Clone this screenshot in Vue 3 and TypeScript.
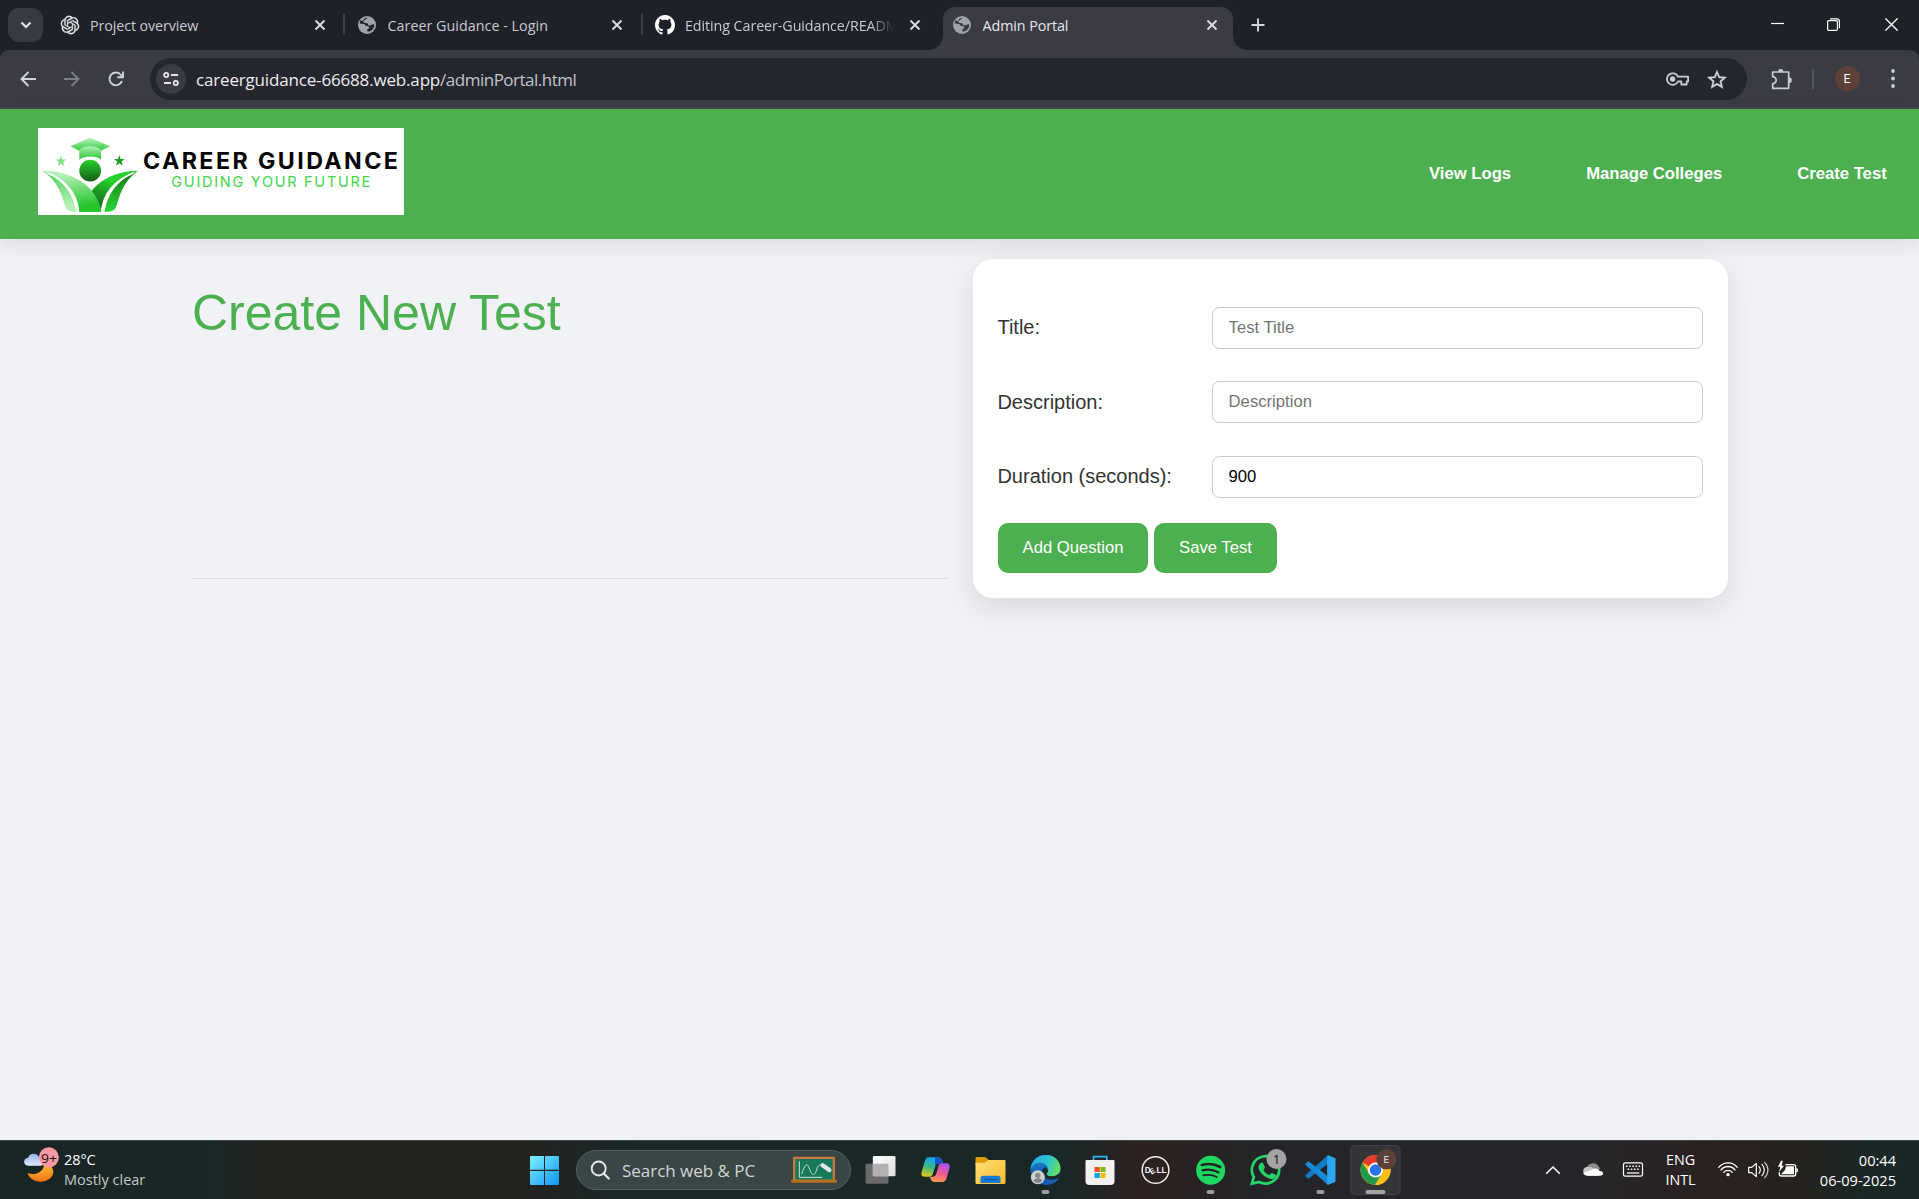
<script setup lang="ts">
import { ref } from 'vue'

interface Tab {
  title: string
  icon: 'openai' | 'globe' | 'github'
  active?: boolean
  separator?: boolean
  cls: string
}

const tabs: Tab[] = [
  { title: 'Project overview', icon: 'openai', separator: true, cls: 't1' },
  { title: 'Career Guidance - Login', icon: 'globe', separator: true, cls: 't2' },
  { title: 'Editing Career-Guidance/README', icon: 'github', cls: 't3' },
  { title: 'Admin Portal', icon: 'globe', active: true, cls: 't4' },
]

const links = ['View Logs', 'Manage Colleges', 'Create Test']
const title = ref('')
const description = ref('')
const duration = ref('900')
</script>

<template>
  <div class="screen">
    <div class="tabstrip">
      <div class="tab-search">
        <svg width="12" height="8" viewBox="0 0 12 8"><path d="M1.5 1.5 6 6l4.500-4.500" fill="none" stroke="#e3e4e8" stroke-width="2.200" /></svg>
      </div>
      <div v-for="t in tabs" :key="t.title" class="tab" :class="{ active: t.active, separated: t.separator }">
        <svg v-if="t.icon === 'openai'" class="fav" viewBox="-1 -1 26 26"><path fill="#e6e7ea" stroke="#e6e7ea" stroke-width=".4" d="M22.2819 9.8211a5.9847 5.9847 0 0 0-.5157-4.9108 6.0462 6.0462 0 0 0-6.5098-2.9A6.0651 6.0651 0 0 0 4.9807 4.1818a5.9847 5.9847 0 0 0-3.9977 2.9 6.0462 6.0462 0 0 0 .7427 7.0966 5.98 5.98 0 0 0 .511 4.9107 6.051 6.051 0 0 0 6.5146 2.9001A5.9847 5.9847 0 0 0 13.2599 24a6.0557 6.0557 0 0 0 5.7718-4.2058 5.9894 5.9894 0 0 0 3.9977-2.9001 6.0557 6.0557 0 0 0-.7475-7.0729zm-9.022 12.6081a4.4755 4.4755 0 0 1-2.8764-1.0408l.1419-.0804 4.7783-2.7582a.7948.7948 0 0 0 .3927-.6813v-6.7369l2.02 1.1686a.071.071 0 0 1 .038.052v5.5826a4.504 4.504 0 0 1-4.4945 4.4944zm-9.6607-4.1254a4.4708 4.4708 0 0 1-.5346-3.0137l.142.0852 4.783 2.7582a.7712.7712 0 0 0 .7806 0l5.8428-3.3685v2.3324a.0804.0804 0 0 1-.0332.0615L9.74 19.9502a4.4992 4.4992 0 0 1-6.1408-1.6464zM2.3408 7.8956a4.485 4.485 0 0 1 2.3655-1.9728V11.6a.7664.7664 0 0 0 .3879.6765l5.8144 3.3543-2.0201 1.1685a.0757.0757 0 0 1-.071 0l-4.8303-2.7865A4.504 4.504 0 0 1 2.3408 7.872zm16.5963 3.8558L13.1038 8.364 15.1192 7.2a.0757.0757 0 0 1 .071 0l4.8303 2.7913a4.4944 4.4944 0 0 1-.6765 8.1042v-5.6772a.79.79 0 0 0-.407-.667zm2.0107-3.0231l-.142-.0852-4.7735-2.7818a.7759.7759 0 0 0-.7854 0L9.409 9.2297V6.8974a.0662.0662 0 0 1 .0284-.0615l4.8303-2.7866a4.4992 4.4992 0 0 1 6.6802 4.66zM8.3065 12.863l-2.02-1.1638a.0804.0804 0 0 1-.038-.0567V6.0742a4.4992 4.4992 0 0 1 7.3757-3.4537l-.142.0805L8.704 5.459a.7948.7948 0 0 0-.3927.6813zm1.0976-2.3654l2.602-1.4998 2.6069 1.4998v2.9994l-2.5974 1.4997-2.6067-1.4997Z" /></svg>
        <svg v-else-if="t.icon === 'globe'" class="fav" viewBox="0 0 20 20">
          <circle cx="10" cy="10" r="9" fill="#a0a3ab" />
          <path :fill="t.active ? '#3a3b43' : '#1e2128'" d="M11.500 2.600C9 3.200 9.500 4.800 7.600 5.200 5.800 5.500 6.200 7.500 7.800 7.900c1.400.2 3-.1 3.200 1.300.1 1.300 1.500 1.600 2.300 1.200 1-.5 1.700-1.400 3.900-1.200.3 2.200-.6 4.300-2.200 5.700-1.500 1.300-3.200 1.700-4.700 1.700v-2.500c1.200-.1 1.900-.7 1.800-1.700-.1-1.100-1.200-1.300-2.400-1.400-1.700-.2-1.500-2-3-2.100-1.500 0-2.500-.3-3.900-.5.300 1.500-.6-.6.700-3 .4-.8 1.100-1 .9-.3-.3 1.400 1 1.100 1.800.3 1-1 .6-1.500 2.200-2.100 1.100-.4 2-.9 3.100-.7z" />
        </svg>
        <svg v-else class="fav gh" viewBox="0 0 16 16"><path fill="#fff" d="M8 0C3.580 0 0 3.580 0 8c0 3.540 2.290 6.530 5.470 7.590.4.070.550-.170.550-.380 0-.190-.010-.820-.010-1.490-2.010.370-2.530-.490-2.690-.940-.090-.230-.480-.940-.820-1.130-.280-.150-.680-.520-.010-.530.630-.010 1.080.580 1.230.820.720 1.210 1.870.870 2.330.660.070-.520.280-.870.510-1.070-1.780-.2-3.640-.890-3.640-3.950 0-.870.310-1.590.820-2.150-.080-.2-.360-1.020.080-2.120 0 0 .670-.210 2.200.820.640-.180 1.320-.270 2-.270s1.360.090 2 .270c1.530-1.040 2.200-.820 2.200-.820.440 1.100.160 1.920.080 2.120.510.560.820 1.270.820 2.150 0 3.070-1.870 3.750-3.650 3.950.290.250.540.730.540 1.480 0 1.070-.010 1.930-.010 2.200 0 .210.150.460.550.380A8.013 8.013 0 0 0 16 8c0-4.420-3.580-8-8-8z" /></svg>
        <span class="tab-title" :class="t.cls">{{ t.title }}</span>
        <svg class="tab-close" viewBox="0 0 12 12"><path d="M1.500 1.500l9 9M10.500 1.500l-9 9" fill="none" stroke="#dcdde2" stroke-width="1.900" /></svg>
      </div>
      <svg class="new-tab" viewBox="0 0 14 14"><path d="M7 .5v13M.5 7h13" stroke="#d3d5db" stroke-width="1.900" /></svg>
      <div class="win-controls">
        <svg viewBox="0 0 13 13"><path d="M0 5.500h13" stroke="#fff" stroke-width="1.200" /></svg>
        <svg viewBox="0 0 13 13"><g fill="none" stroke="#fff" stroke-width="1.200"><rect x=".6" y="2.600" width="9.800" height="9.800" rx="1.200" /><path d="M3 .8h7a2.400 2.400 0 0 1 2.400 2.400v7" /></g></svg>
        <svg viewBox="0 0 13 13"><path d="M.4.4l12.200 12.200M12.600.4.4 12.600" stroke="#fff" stroke-width="1.300" /></svg>
      </div>
    </div>

    <div class="toolbar-wrap">
      <div class="toolbar">
        <svg class="nav-ico" viewBox="0 0 16 16"><path d="M8.500 1 1.500 8l7 7M1.500 8H16" fill="none" stroke="#cfd1d7" stroke-width="1.900" /></svg>
        <svg class="nav-ico" viewBox="0 0 16 16"><path d="M7.500 1l7 7-7 7M14.500 8H0" fill="none" stroke="#7d7e85" stroke-width="1.900" /></svg>
        <svg class="nav-ico reload" viewBox="0 0 16 16"><path d="M13.900 10.200A6.400 6.400 0 1 1 13 4l1.500 1.800M15 .5v5.700H9.300" fill="none" stroke="#cfd1d7" stroke-width="1.900" /></svg>
        <div class="omnibox">
          <span class="site-info">
            <svg width="16" height="14" viewBox="0 0 16 14" fill="none" stroke="#e3e4e8" stroke-width="1.800"><circle cx="3.200" cy="3" r="2.100" /><path d="M8 3h7M1 11h7" /><circle cx="12.800" cy="11" r="2.100" /></svg>
          </span>
          <span class="url">careerguidance-66688.web.app<span class="path">/adminPortal.html</span></span>
          <svg class="key" viewBox="0 0 23 14"><g fill="none" stroke="#cbccd1" stroke-width="1.800"><path d="M12 4.700A5.800 5.800 0 1 0 12 9.500h3.300v3h5.400V9.500h1.400V4.700z" stroke-linejoin="round" /></g><circle cx="6.600" cy="7" r="2.700" fill="#cbccd1" /></svg>
          <svg class="star" viewBox="2 2 20 19.500"><path fill="#d3d4d9" stroke="#d3d4d9" stroke-width=".3" d="M22 9.240l-7.190-.620L12 2 9.190 8.630 2 9.240l5.460 4.730L5.820 21 12 17.270 18.180 21l-1.630-7.030L22 9.240zM12 15.400l-3.760 2.270 1-4.280-3.320-2.880 4.380-.380L12 6.100l1.710 4.040 4.380.380-3.320 2.880 1 4.280L12 15.400z" /></svg>
        </div>
        <svg class="ext" viewBox="512 202 66 66"><path d="M517 214h48v49H517V249a10.500 10.500 0 0 0 0-21z" fill="none" stroke="#c9ccd6" stroke-width="5.200" stroke-linejoin="round" /><path d="M533 213a8 8 0 0 1 16 0zM566 230a8 8 0 0 1 0 17z" fill="#c9ccd6" /></svg>
        <i class="bar-sep"></i>
        <span class="avatar">E</span>
        <svg class="dots" viewBox="0 0 4 19" fill="#c9ccd6"><circle cx="2" cy="2" r="1.900" /><circle cx="2" cy="9.500" r="1.900" /><circle cx="2" cy="17" r="1.900" /></svg>
      </div>
    </div>

    <header class="site-header">
      <svg class="logo" viewBox="114 69 1098 261">
        <defs>
          <linearGradient id="capG" x1="0" y1="0" x2="0" y2="1"><stop offset="0" stop-color="#b9f3bd" /><stop offset=".75" stop-color="#2ec936" /></linearGradient>
          <linearGradient id="capB" x1="0" y1="0" x2="0" y2="1"><stop offset="0" stop-color="#aef0b2" /><stop offset="1" stop-color="#26c52e" /></linearGradient>
          <linearGradient id="headG" x1="0" y1="0" x2="0" y2="1"><stop offset="0" stop-color="#27d12c" /><stop offset="1" stop-color="#155a18" /></linearGradient>
          <linearGradient id="leafL" x1="0" y1="0" x2="0.300" y2="1"><stop offset=".2" stop-color="#b4f0b7" /><stop offset="1" stop-color="#25c52c" /></linearGradient>
          <linearGradient id="leafR" x1="0.700" y1="0" x2="0.200" y2="1"><stop offset=".3" stop-color="#27d22c" /><stop offset="1" stop-color="#0f5a14" /></linearGradient>
          <linearGradient id="sideL" x1="0" y1="0" x2="0.300" y2="1"><stop offset="0" stop-color="#42cf49" /><stop offset="1" stop-color="#b4f2b8" /></linearGradient>
          <linearGradient id="sideR" x1="0" y1="0" x2="0" y2="1"><stop offset="0" stop-color="#157519" /><stop offset="1" stop-color="#2ad832" /></linearGradient>
        </defs>
        <rect x="114" y="69" width="1098" height="261" fill="#fff" />
        <path d="M270 98l60 26-60 30-59-30z" fill="url(#capG)" />
        <path d="M238 136c8-16 56-16 65 0v28c-14-13-50-13-65 0z" fill="url(#capB)" />
        <circle cx="270.500" cy="197" r="32.500" fill="url(#headG)" />
        <path d="M183 152l4 11.500h12l-9.500 7.500 3.500 12-10-7-10 7 3.500-12-9.500-7.500h12z" fill="#7fe085" />
        <path d="M358 150l4 12h12l-9.500 7.500 3.500 12.500-10-7-10 7 3.500-12.500-9.500-7.500h12z" fill="#1c9f24" />
        <path d="M126 197c36 20 54 56 65 92 6 22 10 32 38 32-9-57-42-100-103-124z" fill="url(#sideL)" />
        <path d="M414 198c-35 24-50 56-61 93-6 22-10 30-39 30 8-59 44-99 100-123z" fill="url(#sideR)" />
        <path d="M414 197c-65 0-120 30-142 66 16 18 27 34 31 58 7-59 47-102 111-124z" fill="url(#leafR)" />
        <path d="M126 197c78-2 159 36 178 118v6h-66c-3-59-45-104-112-124z" fill="url(#leafL)" />
        <path d="M142 204c55 22 87 62 92 117M400 204c-55 22-90 62-95 117" fill="none" stroke="#fff" stroke-width="5" />
        <text x="429" y="192" textLength="772" lengthAdjust="spacingAndGlyphs" class="logo-main">CAREER GUIDANCE</text>
        <text x="514" y="246" textLength="602" lengthAdjust="spacingAndGlyphs" class="logo-sub">GUIDING YOUR FUTURE</text>
      </svg>
      <nav class="links">
        <a v-for="l in links" :key="l">{{ l }}</a>
      </nav>
    </header>

    <main class="content">
      <section class="intro"><h1>Create New Test</h1></section>
      <section class="card">
        <div class="row"><label>Title:</label><input v-model="title" placeholder="Test Title" /></div>
        <div class="row"><label>Description:</label><input v-model="description" placeholder="Description" /></div>
        <div class="row"><label>Duration (seconds):</label><input v-model="duration" /></div>
        <div class="actions"><button>Add Question</button><button>Save Test</button></div>
      </section>
    </main>

    <footer class="taskbar">
      <div class="weather">
        <svg width="64" height="58" viewBox="0 33 192 174">
          <defs>
            <linearGradient id="moon" x1="0" y1="0" x2="0" y2="1"><stop offset="0" stop-color="#fbc02c" /><stop offset="1" stop-color="#f0731e" /></linearGradient>
            <linearGradient id="cloud" x1="0" y1="0" x2="0" y2="1"><stop offset="0" stop-color="#8fb4f0" /><stop offset="1" stop-color="#dfe9fb" /></linearGradient>
          </defs>
          <path d="M83 129c22 10 52-4 49-30 15 2 28 12 28 26a38 30 0 0 1-38 30c-20 0-35-10-39-26z" fill="url(#moon)" />
          <path d="M84 107a11 11 0 0 1 0-23c3-16 28-17 33-2 14-2 20 24 5 25z" fill="url(#cloud)" />
          <circle cx="146.500" cy="82" r="30" fill="#ff99a4" />
          <text x="147" y="98" text-anchor="middle" class="badge9" textLength="48" lengthAdjust="spacingAndGlyphs">9+</text>
        </svg>
        <div class="weather-text"><span class="temp">28°C</span><span class="cond">Mostly clear</span></div>
      </div>

      <div class="apps">
        <svg class="slot" viewBox="21 33 165 174">
          <defs><linearGradient id="win" gradientUnits="userSpaceOnUse" x1="60" y1="78" x2="147" y2="165"><stop offset="0" stop-color="#7ff0ff" /><stop offset="1" stop-color="#1095fb" /></linearGradient></defs>
          <path fill="url(#win)" d="M63 78h39v41H60V81q0-3 3-3zM105 78h39q3 0 3 3v38h-42zM60 123h42v42H63q-3 0-3-3zM105 123h42v39q0 3-3 3h-39z" />
        </svg>
        <div class="search">
          <svg width="20" height="20" viewBox="0 0 20 20"><circle cx="8.700" cy="8.500" r="7" fill="none" stroke="#e9ebeb" stroke-width="1.900" /><path d="M13.700 13.500l5 5" stroke="#e9ebeb" stroke-width="2.200" stroke-linecap="round" /></svg>
          <span>Search web &amp; PC</span>
          <svg class="board" width="46" height="28" viewBox="843 82 138 84">
            <rect x="849" y="84" width="126" height="74" rx="3" fill="#c9783b" /><rect x="856" y="91" width="112" height="62" fill="#18795a" />
            <rect x="843" y="153" width="138" height="9" rx="3" fill="#b8721b" />
            <path d="M868 98v48h68M875 136c12-36 18-32 24-14s14 24 22-2c4-12 10-12 18-12" fill="none" stroke="#cde8dd" stroke-width="3" />
            <path d="M938 110l20 14" stroke="#e5e3ee" stroke-width="13" stroke-linecap="round" />
          </svg>
        </div>
        <svg class="slot first" viewBox="1030.5 33 165 174">
          <defs><linearGradient id="tv" x1="0" y1="0" x2="1" y2="1"><stop offset="0" stop-color="#fff" /><stop offset="1" stop-color="#dedede" /></linearGradient></defs>
          <rect x="1068" y="101" width="69" height="60" rx="4" fill="#6b6a6a" /><rect x="1090" y="78" width="68" height="61" rx="4" fill="url(#tv)" /><path d="M1090 101h47v38h-43q-4 0-4-4z" fill="#b1b1b1" />
        </svg>
        <svg class="slot" viewBox="1195.5 33 165 174">
          <defs>
            <linearGradient id="cpA" x1="0.300" y1="0" x2="0" y2="1"><stop offset="0" stop-color="#19a5ee" /><stop offset=".45" stop-color="#37b982" /><stop offset="1" stop-color="#ffca0b" /></linearGradient>
            <linearGradient id="cpB" x1="0.600" y1="0" x2="0.300" y2="1"><stop offset="0" stop-color="#a952ee" /><stop offset=".5" stop-color="#ee5b91" /><stop offset="1" stop-color="#fd9a4f" /></linearGradient>
          </defs>
          <path d="M1258 82h28c8 0 12 6 15 18h-12c-7 0-10 2-12 10l-7 22c-2 6-6 8-12 8h-12c-11 0-12-7-9-16l8-28c3-9 6-14 13-14z" fill="url(#cpA)" />
          <path d="M1276 82h10c8 0 12 6 15 18h-12c-7 0-10 2-12 8z" fill="#1852ce" />
          <path d="M1299 156h-23c-8 0-12-5-15-16h7c8 0 11-4 13-11l6-21c2-6 5-8 11-8h12c10 0 12 7 10 15l-8 27c-3 10-6 14-13 14z" fill="url(#cpB)" />
        </svg>
        <svg class="slot" viewBox="10.5 33 165 174">
          <defs><linearGradient id="fold" x1="0" y1="0" x2="1" y2="1"><stop offset="0" stop-color="#ffe07a" /><stop offset="1" stop-color="#fcba29" /></linearGradient></defs>
          <path d="M48 85q0-4 4-4h22q4 0 7 3l7 6h-1v14H48z" fill="#dd9b06" /><path d="M48 98h26q4 0 7-3l5-5h49q3 0 3 3v65q0 4-4 4H52q-4 0-4-4z" fill="url(#fold)" />
          <path d="M63 159v-14q0-8 8-8h44q8 0 8 8v14z" fill="#147bd0" /><path d="M74 149h38" stroke="#0c559c" stroke-width="3" />
        </svg>
        <svg class="slot" viewBox="175.5 33 165 174">
          <defs>
            <linearGradient id="ed1" x1="0" y1=".3" x2="1" y2=".6"><stop offset="0" stop-color="#24a6e8" /><stop offset=".55" stop-color="#2fc5c9" /><stop offset="1" stop-color="#69e05a" /></linearGradient>
            <linearGradient id="ed2" x1="0" y1="0" x2="0" y2="1"><stop offset="0" stop-color="#1786d8" /><stop offset="1" stop-color="#0f4ba0" /></linearGradient>
          </defs>
          <circle cx="258" cy="120" r="45" fill="url(#ed2)" />
          <path d="M213 119c2-28 22-44 46-44 27 0 44 19 44 39 0 17-13 25-26 25-9 0-16-3-16-7 0-3 5-5 5-13 0-13-13-21-26-21-12 0-22 8-27 21z" fill="url(#ed1)" />
          <path d="M249 107c-11 8-9 32 9 40 12 5 27 4 42-5-8 17-29 26-48 20-18-7-24-42-3-55z" fill="#145eb7" />
          <path d="M266 119c0 8-5 10-5 13 0 4 7 7 16 7 10 0 19-4 26-14v14l-5 5c-12 6-30 6-41-1-10-8-12-20-4-30 7-4 9 0 9 6z" fill="#1d2827" />
          <circle cx="235" cy="142" r="21" fill="#cfcfcf" /><circle cx="235" cy="136" r="8" fill="#858585" /><path d="M222 154c0-12 26-12 26 0a20 20 0 0 1-26 0z" fill="#858585" />
          <rect x="246" y="180" width="24" height="12" rx="6" fill="#9b9e9d" />
        </svg>
        <svg class="slot" viewBox="340.5 33 165 174">
          <path d="M402 96V80h40v16" fill="none" stroke="#32b5f2" stroke-width="5" />
          <path d="M378 93q0-3 3-3h81q3 0 3 3v60q0 12-12 12h-63q-12 0-12-12z" fill="#f1f1f1" />
          <path d="M405 111h16v15h-16z" fill="#f25022" /><path d="M423 111h15v15h-15z" fill="#7fba00" /><path d="M405 129h16v15h-16z" fill="#00a4ef" /><path d="M423 129h15v15h-15z" fill="#ffb900" />
        </svg>
        <svg class="slot" viewBox="505.5 33 165 174">
          <circle cx="588" cy="120" r="40" fill="none" stroke="#eee" stroke-width="4.500" />
          <text x="556" y="130" class="dell">D</text>
          <text transform="translate(577 134) rotate(-36)" class="dell dell-e">E</text>
          <text x="591" y="130" class="dell">LL</text>
        </svg>
        <svg class="slot" viewBox="670.5 33 165 174">
          <circle cx="753.500" cy="120.500" r="43.500" fill="#1ed760" />
          <g fill="none" stroke="#232323" stroke-linecap="round"><path d="M727 105c18-5 39-3 55 6" stroke-width="8" /><path d="M729 121c16-4 34-2 48 6" stroke-width="6.500" /><path d="M731 136c14-3 28-2 41 5" stroke-width="5.500" /></g>
          <rect x="741" y="180" width="24" height="12" rx="6" fill="#9b9b9b" />
        </svg>
        <svg class="slot" viewBox="835.5 33 165 174">
          <path d="M877 161l6-20a41 41 0 1 1 16 15z" fill="none" stroke="#25d366" stroke-width="8" stroke-linejoin="miter" />
          <path d="M905 98c4-2 6 1 7 4l4 9c1 3-4 7-4 9 4 8 10 12 17 15 3 0 6-7 8-6l11 5c3 2 1 7-1 9-6 6-15 4-23 0-12-5-20-14-25-24-4-8-1-17 6-21z" fill="#25d366" />
          <circle cx="951" cy="87" r="30" fill="#a5a3a1" />
          <text x="951" y="102" text-anchor="middle" class="badge1">1</text>
        </svg>
        <svg class="slot" viewBox="1000.5 33 165 174">
          <path d="M1105 76v25l-56 44q-3 2-5 0l-6-6q-2-3 1-5z" fill="#1379c0" />
          <path d="M1105 164v-25l-56-44q-3-2-5 0l-6 6q-2 3 1 5z" fill="#168ad6" />
          <path d="M1105 75l23 10v70l-23 10q-3-2-2-6V81z" fill="#2aa7f2" />
          <rect x="1071" y="180" width="24" height="12" rx="6" fill="#9b9b9b" />
        </svg>
        <svg class="slot" viewBox="1165.5 33 165 174">
          <rect x="1174.500" y="46.500" width="147" height="147" rx="12" fill="#343537" stroke="#424345" stroke-width="3" />
          <circle cx="1248" cy="120" r="45" fill="#fbc116" />
          <path d="M1248 120l-39-22.500a45 45 0 0 1 78 0z" fill="#e33b2e" />
          <path d="M1209 97.500l19.500 33.800 19.500 11.200-1 22.500a45 45 0 0 1-38-67.500z" fill="#239a4b" /><path d="M1228 131h39l-20 34z" fill="#239a4b" />
          <path d="M1267 131l-20 34a45 45 0 0 0 40-67.500h-39z" fill="#fbc116" />
          <circle cx="1248" cy="120" r="22.500" fill="#fff" /><circle cx="1248" cy="120" r="17.500" fill="#2a73ea" />
          <circle cx="1280.500" cy="88" r="30" fill="#5d4037" />
          <text x="1280" y="98" text-anchor="middle" class="badge-e">E</text>
          <rect x="1218" y="180" width="60" height="12" rx="6" fill="#a5a5a3" />
        </svg>
      </div>

      <div class="tray">
        <svg class="t-ico" viewBox="57 33 90 174"><path d="M83 130l19-19 19 19" fill="none" stroke="#fff" stroke-width="4.500" stroke-linecap="round" /></svg>
        <svg class="t-ico sp" viewBox="177 33 90 174"><path d="M203 113c8-18 32-18 39 2l-4 12-32 4z" fill="#8d8d8d" /><path d="M206 137a15 13 0 1 1 4-27c6 0 10 2 14 6l18 10-4 11z" fill="#c7c7c7" /><path d="M207 137c-8 0-14-4-14-8l26-10c8-7 20-3 23 4 14 1 13 14 1 14z" fill="#fff" /></svg>
        <svg class="t-ico sp" viewBox="297 33 90 174"><rect x="313.500" y="98.500" width="57" height="40" rx="5" fill="none" stroke="#fff" stroke-width="3.600" /><path d="M321 109h42M326 118h36" stroke="#fff" stroke-width="4.500" stroke-dasharray="4.500 5" /><path d="M324 129h37" stroke="#fff" stroke-width="3.600" /></svg>
        <div class="lang"><span>ENG</span><span>INTL</span></div>
        <svg class="t-ico" viewBox="582 33 90 174"><g fill="none" stroke="#fff" stroke-width="3.800" stroke-linecap="round"><path d="M599 112c15-18 42-18 56 0M606 120c11-14 31-14 42 0M614 127c7-8 19-8 26 0" /></g><circle cx="627" cy="134" r="5" fill="#fff" /></svg>
        <svg class="t-ico" viewBox="672 33 90 174"><g fill="none" stroke="#fff" stroke-width="3.600" stroke-linecap="round" stroke-linejoin="round"><path d="M689 112h9l14-12v40l-14-12h-9zM720 110c5 5 5 15 0 20M729 103c9 9 9 25 0 34" /><path d="M737 97c13 13 13 33 0 46" stroke="#c7c7c7" /></g></svg>
        <svg class="t-ico" viewBox="762 33 90 174"><path d="M799 104h25q6 0 6 6v22q0 6-6 6h-37q-6 0-6-6v-5" fill="none" stroke="#fff" stroke-width="4" /><path d="M801 109h24v24h-39l12-13z" fill="#fff" /><path d="M832 114q5 0 5 7t-5 7z" fill="#fff" /><path d="M786 92l-9 18h7l-4 16 15-19h-7l3-15z" fill="#fff" /></svg>
        <div class="clock"><span class="hm">00:44</span><span class="date">06-09-2025</span></div>
      </div>
    </footer>
  </div>
</template>

<style>
body { margin: 0; overflow: hidden; }
</style>

<style scoped>
.screen { width: 1919px; height: 1199px; display: flex; flex-direction: column; background: #f0f2f6; font-family: "Liberation Sans", Arial, sans-serif; overflow: hidden; }
svg { display: block; flex: none; }
.tabstrip { height: 50px; flex: none; display: flex; align-items: stretch; background: #1e2128; font: 14.3px "Open Sans", "Noto Sans", sans-serif; color: #c9cad0; }
.tab-search { width: 35px; height: 34px; margin: 8px 7.500px 0 8px; border-radius: 11px; background: #383a42; display: flex; align-items: center; justify-content: center; }
.tab { position: relative; box-sizing: border-box; width: 289.5px; height: 43px; margin: 7px 8px 0 0; padding: 0 14px 7px 9px; display: flex; align-items: center; }
.tab.active { margin-right: 0; background: #3a3b43; border-radius: 12px 12px 0 0; color: #e6e7ea; }
.tab.active::before, .tab.active::after { content: ""; position: absolute; bottom: 0; width: 14px; height: 14px; }
.tab.active::before { left: -14px; background: radial-gradient(circle at 0 0, transparent 13.5px, #3a3b43 14px); }
.tab.active::after { right: -14px; background: radial-gradient(circle at 100% 0, transparent 13.5px, #3a3b43 14px); }
.tab.separated::after { content: ""; position: absolute; right: -5px; top: 7px; width: 2px; height: 21px; background: #3c3e46; }
.fav { width: 20px; height: 20px; }
.tab-title { margin-left: 10.5px; padding-top: 2px; width: 210px; white-space: nowrap; overflow: hidden; line-height: 20px; }
.t1 { letter-spacing: -.1px; }
.t2 { letter-spacing: .03px; }
.t3 { letter-spacing: -.08px; -webkit-mask-image: linear-gradient(90deg, #000 185px, transparent 209px); mask-image: linear-gradient(90deg, #000 185px, transparent 209px); }
.t4 { letter-spacing: -.08px; }
.tab-close { width: 12px; height: 12px; margin-left: 13.500px; }
.new-tab { width: 14px; height: 14px; margin: 18px 0 0 18.5px; }
.win-controls { margin-left: auto; display: flex; gap: 43.500px; padding: 18px 21px 0 0; }
.win-controls svg { width: 13px; height: 13px; }
.win-controls svg:last-child { margin-left: 1.500px; }
.toolbar-wrap { height: 59px; flex: none; background: #1e2128; }
.toolbar { box-sizing: border-box; height: 59px; padding: 0 24px 0 20px; border-bottom: 2px solid #4a4a4e; background: #3a3b43; display: flex; align-items: center; clip-path: path("M0 59V10Q0 0 10 0H1909Q1919 0 1919 10V59Z"); }
.nav-ico { width: 16px; height: 16px; margin-right: 28px; }
.reload { margin: 0; }
.omnibox { box-sizing: border-box; width: 1597px; height: 42px; margin: 1px 0 0 26px; padding: 0 20px 0 6px; border-radius: 21px; background: #24262d; display: flex; align-items: center; }
.site-info { width: 30px; height: 30px; border-radius: 50%; background: #3a3b43; display: flex; align-items: center; justify-content: center; }
.url { margin: 0 auto 0 10px; font: 17px "Open Sans", "Noto Sans", sans-serif; letter-spacing: -.17px; color: #eceded; white-space: nowrap; }
.path { color: #c3c4c9; letter-spacing: -.5px; }
.key { width: 23px; height: 14px; margin-right: 18px; }
.star { width: 20px; height: 19px; }
.ext { width: 22px; height: 22px; margin-left: 24px; }
.bar-sep { width: 2px; height: 20px; margin-left: 19.500px; background: #54565f; }
.avatar { width: 25px; height: 25px; margin-left: 20.500px; border-radius: 50%; background: #5d4037; color: #fff; font: 12.500px/25px Roboto, sans-serif; text-align: center; }
.dots { width: 4px; height: 19px; margin-left: 31.500px; }

.site-header { position: relative; box-sizing: border-box; height: 130px; flex: none; padding: 0 32.300px 0 38px; background: #4caf50; display: flex; justify-content: space-between; align-items: center; box-shadow: 0 5px 19px rgba(0, 0, 0, .1); }
.logo { width: 366px; height: 87px; margin-top: -5px; }
.logo-main { font: 700 68px Inter, sans-serif; letter-spacing: 7px; fill: #050505; }
.logo-sub { font: 400 42px Inter, sans-serif; letter-spacing: 5px; fill: #42d64b; }
.links { display: flex; gap: 75px; color: #fff; font-weight: 700; font-size: 16.667px; line-height: 20px; }
.content { flex: 1; display: flex; gap: 25px; padding: 20px 191px 0 192px; align-items: flex-start; }
.intro { box-sizing: border-box; width: 756px; height: 320px; border-bottom: 1px solid #dcdcde; }
h1 { margin: 24px 0 0; font-weight: 400; font-size: 50px; line-height: 60px; color: #4caf50; }
.card { box-sizing: border-box; width: 755px; height: 339px; padding: 48px 25px 25px; border-radius: 20px; background: #fff; box-shadow: 0 10px 30px rgba(0, 0, 0, .1); }
.row { display: flex; align-items: center; height: 42px; margin-bottom: 32px; }
.row:nth-child(2) { margin-bottom: 33px; }
.row:nth-child(3) { margin-bottom: 25px; }
label { box-sizing: border-box; width: 214px; margin-left: -.6px; margin-right: .6px; padding-bottom: 1px; font-size: 20px; color: #333; }
.row:nth-child(2) label { padding-bottom: 0; }
input { box-sizing: border-box; width: 491px; height: 42px; padding: 0 15.600px; border: 1px solid #ccc; border-radius: 7.500px; background: #fff; font: 16.667px "Liberation Sans", Arial, sans-serif; color: #000; outline: none; }
input::placeholder { color: #757575; }
.actions { display: flex; gap: 6px; }
button { height: 50px; width: 150px; padding: 0; border: 0; border-radius: 10px; background: #4caf50; color: #fff; font: 16.667px "Liberation Sans", Arial, sans-serif; white-space: nowrap; }
button:last-child { width: 123px; }

.taskbar { box-sizing: border-box; height: 59px; flex: none; border-top: 1px solid #3d4746; display: flex; background: linear-gradient(90deg, #192525 0, #1b2727 210px, #24221f 270px, #24221f 510px, #1a2828 640px, #192827 1060px, #2c2120 1140px, #2a2222 1180px, #242528 1260px, #25262a 1560px, #2a2120 1720px, #24221f 1800px, #1a2726 1870px); font: 15px "Open Sans", "Noto Sans", sans-serif; color: #fff; }
.weather { width: 517px; display: flex; }
.weather-text { display: flex; flex-direction: column; padding-top: 9px; font-size: 14.500px; }
.weather-text span, .lang span, .clock span { line-height: 20px; white-space: nowrap; }
.temp { letter-spacing: -.1px; }
.cond { color: #c5c9c8; }
.badge9 { font: 38px "Open Sans", sans-serif; fill: #111; }
.badge1 { font: 40px "Open Sans", sans-serif; fill: #111; }
.badge-e { font: 500 29px Roboto, sans-serif; fill: #d7ccc8; }
.dell { font: 700 25px "Liberation Sans", sans-serif; fill: #eee; }
.dell-e { font-size: 23px; }
.apps { display: flex; }
.slot { width: 55px; height: 58px; }
.search { box-sizing: border-box; width: 275px; height: 40px; margin: 9px 0 0 4px; padding: 0 13px 0 13px; border: 1px solid #566160; border-radius: 20px; background: #3a4545; display: flex; align-items: center; font-size: 17px; color: #d3d6d6; white-space: nowrap; }
.search span { margin-left: 12px; letter-spacing: -.03px; }
.board { margin-left: auto; }
.first { margin-left: 2px; }
.tray { margin-left: auto; display: flex; padding-right: 23px; font-size: 14.300px; }
.t-ico { width: 30px; height: 58px; }
.sp { margin-left: 10px; }
.lang { width: 50px; margin: 9px 7.500px 0 7.500px; display: flex; flex-direction: column; text-align: center; }
.clock { width: 93px; padding-top: 9px; display: flex; flex-direction: column; align-items: flex-end; font-size: 14.600px; }
</style>
